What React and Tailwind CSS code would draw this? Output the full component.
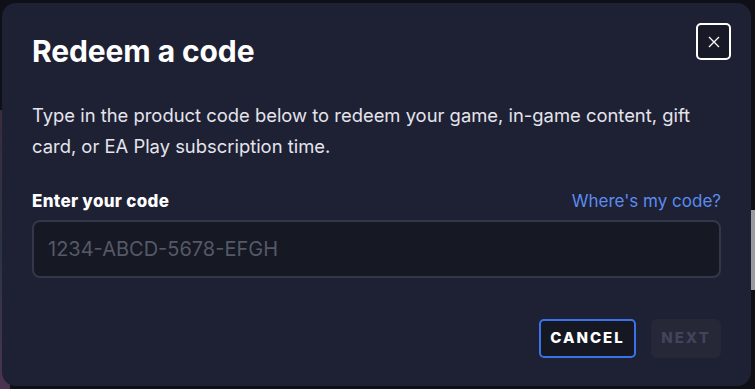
export default function App() {
  return (
    <div className="relative w-[755px] h-[389px] overflow-hidden bg-[#0e0f17]" style={{ fontFamily: 'Inter, "Noto Sans", sans-serif' }}>
      {/* backdrop scraps */}
      <div className="absolute left-0 top-[110px] w-[10px] h-[279px] bg-gradient-to-b from-[#3a2c3e] via-[#2a3440] to-[#4a3450]" />
      <div className="absolute right-0 top-[210px] w-[10px] h-[80px] bg-[#9a9aa0]" />
      <div className="absolute left-[2px] top-[3px] w-[749px] h-[383px] rounded-[14px] bg-[#1e2033] px-[30px] pt-[20px] flex flex-col">
        <div className="flex items-start justify-between">
          <h1 className="mt-[10px] text-[30px] leading-[36px] font-bold text-white tracking-[-0.1px]">Redeem a code</h1>
          <button className="mr-[-10px] w-[35px] h-[37px] rounded-[5px] border-2 border-white bg-[#171926] flex items-center justify-center">
            <svg width="12" height="12" viewBox="0 0 12 12" fill="none" stroke="white" strokeWidth="1.3">
              <path d="M1 1 L11 11 M11 1 L1 11" />
            </svg>
          </button>
        </div>
        <p className="mt-[31px] text-[18.4px] leading-[31px] text-[#e4e4ec]">
          Type in the product code below to redeem your game, in-game content, gift card, or EA Play subscription time.
        </p>
        <div className="mt-[27px] flex items-center justify-between">
          <span className="text-[17px] font-extrabold text-white tracking-[0.3px]">Enter your code</span>
          <a className="text-[17px] text-[#5b8cf0]">Where's my code?</a>
        </div>
        <div className="mt-[5px] h-[58px] w-[689px] rounded-[8px] border-2 border-[#34364a] bg-[#161823] flex items-center px-[14px]">
          <input
            className="w-full bg-transparent outline-none text-[20px] text-white placeholder:text-[#555868]"
            placeholder="1234-ABCD-5678-EFGH"
          />
        </div>
        <div className="mt-[41px] flex justify-end gap-[15px]">
          <button className="h-[39px] w-[97px] rounded-[5px] border-2 border-[#3a72ea] bg-[#151823] text-white text-[15px] font-extrabold tracking-[2px]">
            CANCEL
          </button>
          <button className="h-[39px] w-[70px] rounded-[6px] bg-[#262838] text-[#41445a] text-[15px] font-extrabold tracking-[2px]">
            NEXT
          </button>
        </div>
      </div>
    </div>
  );
}
